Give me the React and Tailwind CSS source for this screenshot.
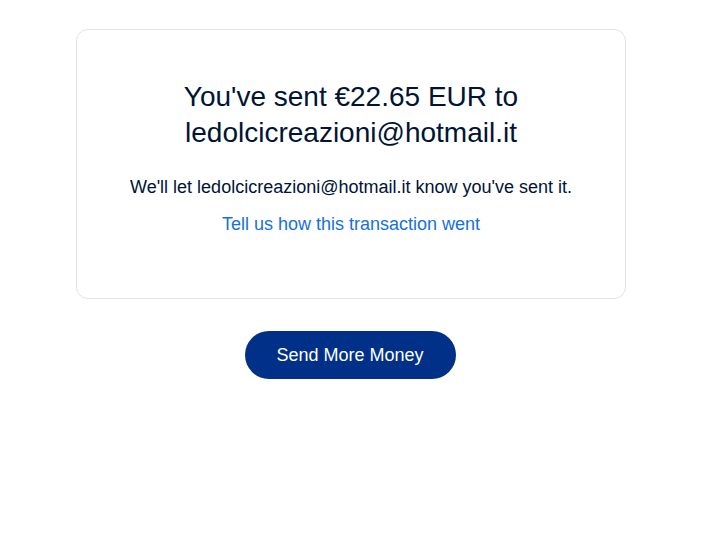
export default function App() {
  return (
    <div className="min-h-screen bg-white pr-[6px] font-['Liberation_Sans',Arial,sans-serif] text-[#001435]">
      <div className="flex flex-col items-center pt-[29px]">
        <div className="w-[550px] rounded-xl border border-[#e3e3e3] px-8 pt-[49px] pb-[61px] text-center">
          <h1 className="mx-auto max-w-[420px] text-[28px] leading-[36px] font-normal">
            You've sent €22.65 EUR to ledolcicreazioni@hotmail.it
          </h1>
          <p className="mt-6 text-lg leading-6">
            We'll let ledolcicreazioni@hotmail.it know you've sent it.
          </p>
          <a href="#" className="mt-[13px] inline-block text-lg leading-6 text-[#1570e3]">
            Tell us how this transaction went
          </a>
        </div>
        <button className="mt-[32px] mr-[2px] h-12 w-[211px] rounded-full bg-[#003087] text-lg text-white">
          Send More Money
        </button>
      </div>
    </div>
  );
}
